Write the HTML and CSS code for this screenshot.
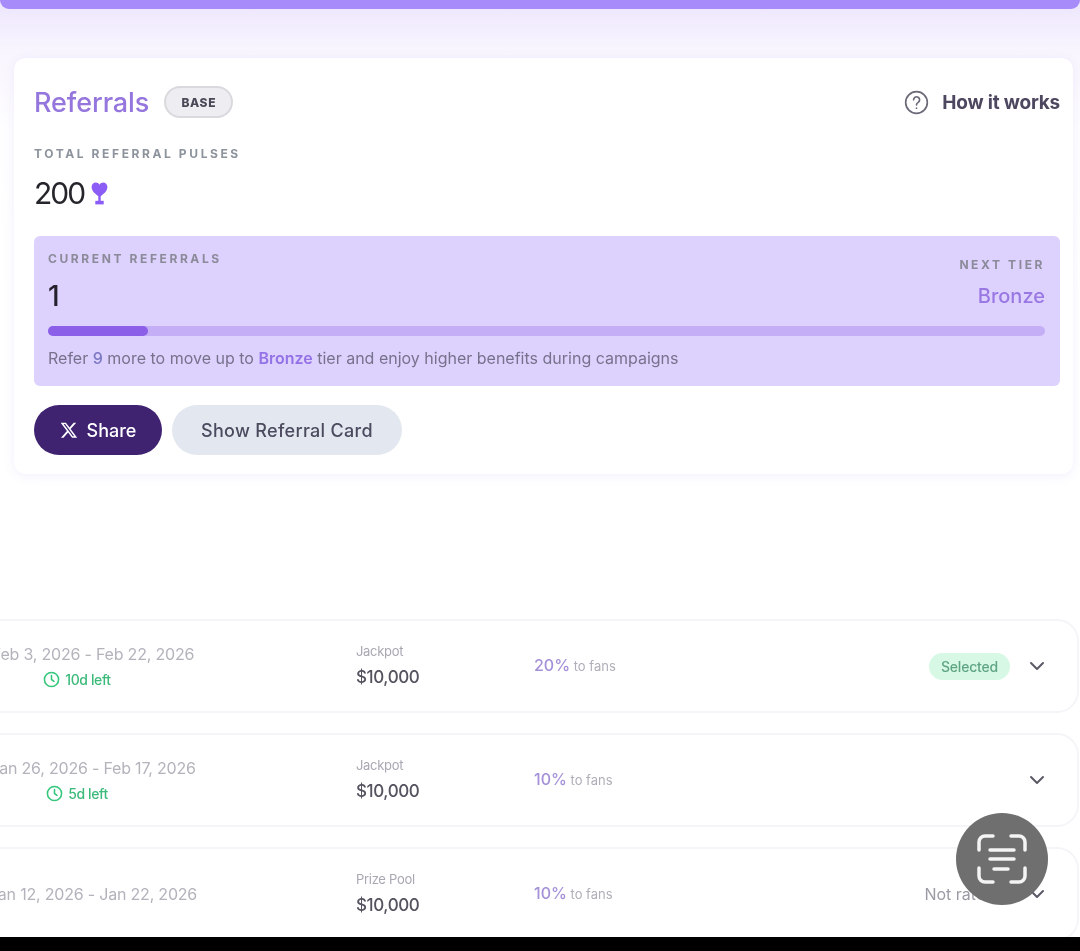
FILE: index.html
```html
<!DOCTYPE html>
<html lang="en">
<head>
  <meta charset="UTF-8" />
  <meta name="viewport" content="width=device-width, initial-scale=1.0"/>
  <title>Referrals</title>
  <link rel="stylesheet" href="styles.css">
</head>

<body>
  <div class="screen">
    <div class="top-band"></div>

    <!-- Referrals card -->
    <div class="card">
      <div class="card-head">
        <div class="card-title">
          <h2>Referrals</h2>
          <span class="tier-badge">BASE</span>
        </div>
        <a class="how-link">
          <svg width="25" height="25" viewBox="0 0 24 24" fill="none" stroke="#6b6878" stroke-width="1.6" stroke-linecap="round">
            <circle cx="12" cy="12" r="10.4"/>
            <path d="M9.2 9.4a2.9 2.9 0 1 1 4.4 2.5c-1 .6-1.6 1.2-1.6 2.3"/>
            <path d="M12 17.4v.1"/>
          </svg>
          How it works
        </a>
      </div>

      <p class="label total-label">TOTAL REFERRAL PULSES</p>
      <div class="total">
        200
        <svg width="17" height="23" viewBox="0 0 17 23" fill="#8b5cf6">
          <path d="M8.5 15C5 12.5.6 9.6.6 5.1.6 2.3 2.7.6 4.8.6c1.6 0 2.9.8 3.7 2.1C9.3 1.4 10.6.6 12.2.6c2.1 0 4.2 1.700 4.2 4.500 0 4.500-4.400 7.400-7.900 9.900z"/>
          <path d="M7.300 13h2.400v6H7.300z"/>
          <path d="M4.300 18.800h8.400V22.400H4.300z"/>
        </svg>
      </div>

      <div class="tier-panel">
        <div class="tier-top">
          <div>
            <p class="label">CURRENT REFERRALS</p>
            <div class="current-count">1</div>
          </div>
          <div class="next-tier">
            <p class="label">NEXT TIER</p>
            <div class="next-name">Bronze</div>
          </div>
        </div>
        <div class="progress"><div class="progress-fill" style="width: 10%"></div></div>
        <p class="tier-note">Refer <b class="num">9</b> more to move up to <b>Bronze</b> tier and enjoy higher benefits during campaigns</p>
      </div>

      <div class="actions">
        <button class="btn btn-share">
          <svg width="18" height="18" viewBox="0 0 24 24" fill="#fff">
            <path d="M18.200 2.200h3.400l-7.400 8.500 8.700 11.500h-6.800l-5.300-7-6.100 7H1.300l7.900-9L.9 2.200h7l4.800 6.400zm-1.200 18h1.900L6.800 4.100H4.800z"/>
          </svg>
          Share
        </button>
        <button class="btn btn-card">Show Referral Card</button>
      </div>
    </div>

    <!-- Campaign rows -->
    <div class="rows">
      <div class="row">
        <div class="col-date">
          <div class="dates">Feb 3, 2026 - Feb 22, 2026</div>
          <div class="left-time">
            <svg width="17" height="17" viewBox="0 0 24 24" fill="none" stroke="#34c77b" stroke-width="2.200" stroke-linecap="round" stroke-linejoin="round"><circle cx="12" cy="12" r="10"/><path d="M12 6.500V12l3.500 2.500"/></svg>
            10d left
          </div>
        </div>
        <div class="col-prize"><span>Jackpot</span><strong>$10,000</strong></div>
        <div class="col-share"><b>20%</b> to fans</div>
        <div class="col-status"><span class="selected">Selected</span></div>
        <svg class="chevron" width="16" height="10" viewBox="0 0 16 10" fill="none" stroke="#5d5a68" stroke-width="2" stroke-linecap="round" stroke-linejoin="round"><path d="M2 2l6 6 6-6"/></svg>
      </div>

      <div class="row">
        <div class="col-date">
          <div class="dates">Jan 26, 2026 - Feb 17, 2026</div>
          <div class="left-time">
            <svg width="17" height="17" viewBox="0 0 24 24" fill="none" stroke="#34c77b" stroke-width="2.200" stroke-linecap="round" stroke-linejoin="round"><circle cx="12" cy="12" r="10"/><path d="M12 6.500V12l3.500 2.500"/></svg>
            5d left
          </div>
        </div>
        <div class="col-prize"><span>Jackpot</span><strong>$10,000</strong></div>
        <div class="col-share"><b>10%</b> to fans</div>
        <div class="col-status"></div>
        <svg class="chevron" width="16" height="10" viewBox="0 0 16 10" fill="none" stroke="#5d5a68" stroke-width="2" stroke-linecap="round" stroke-linejoin="round"><path d="M2 2l6 6 6-6"/></svg>
      </div>

      <div class="row">
        <div class="col-date">
          <div class="dates">Jan 12, 2026 - Jan 22, 2026</div>
        </div>
        <div class="col-prize"><span>Prize Pool</span><strong>$10,000</strong></div>
        <div class="col-share"><b>10%</b> to fans</div>
        <div class="col-status"><span class="not-rated">Not rated</span></div>
        <svg class="chevron" width="16" height="10" viewBox="0 0 16 10" fill="none" stroke="#5d5a68" stroke-width="2" stroke-linecap="round" stroke-linejoin="round"><path d="M2 2l6 6 6-6"/></svg>
      </div>
    </div>

    <div class="bottom-bar"></div>

    <!-- Floating scan button -->
    <div class="scan-btn">
      <svg width="52" height="52" viewBox="0 0 52 52" fill="none" stroke="#f4f4f4" stroke-width="3.500" stroke-linecap="round" stroke-linejoin="round">
        <path d="M3 17V9a6 6 0 0 1 6-6h8"/>
        <path d="M35 3h8a6 6 0 0 1 6 6v8"/>
        <path d="M3 35v8a6 6 0 0 0 6 6h8"/>
        <path d="M49 35v8a6 6 0 0 1-6 6h-8"/>
        <path d="M14 17h24"/>
        <path d="M14 26h24"/>
        <path d="M18 36h14"/>
      </svg>
    </div>
  </div>
</body>
</html>
```

FILE: styles.css
```css
* {
  box-sizing: border-box;
}

body {
  margin: 0;
  font-family: "Inter", "Liberation Sans", sans-serif;
  background-color: #000;
}

/* the reference is a soft, upscaled capture */
.screen {
  position: relative;
  width: 1080px;
  height: 951px;
  overflow: hidden;
  display: flex;
  flex-direction: column;
  background: linear-gradient(180deg, #efe8fd 9px, #f8f5fe 50px, #fefeff 130px, #fff 300px);
  filter: blur(0.6px);
}

.top-band {
  height: 9px;
  flex-shrink: 0;
  background-color: #a78bfa;
  border-radius: 0 0 12px 12px;
}

.card {
  margin: 49px 7px 0 14px;
  height: 416px;
  flex-shrink: 0;
  padding: 20px 13px 0 20px;
  background-color: #fff;
  border-radius: 12px;
  box-shadow: 0 2px 12px rgba(124, 92, 230, 0.09);
}

.card-head {
  display: flex;
  justify-content: space-between;
  align-items: center;
  height: 48px;
}

.card-title {
  display: flex;
  align-items: center;
  gap: 15px;
}

.card-title h2 {
  margin: 0;
  font-size: 27px;
  font-weight: 500;
  letter-spacing: -0.1px;
  color: #9576dd;
}

.tier-badge {
  display: flex;
  align-items: center;
  justify-content: center;
  width: 69px;
  height: 32px;
  border: 2px solid #d9d9de;
  border-radius: 16px;
  background-color: #eeeef2;
  font-size: 12px;
  font-weight: 800;
  letter-spacing: 0.6px;
  color: #494857;
}

.how-link {
  display: flex;
  align-items: center;
  gap: 13px;
  font-size: 19px;
  font-weight: 700;
  letter-spacing: -0.2px;
  color: #4d4760;
}

.label {
  margin: 0;
  font-size: 12px;
  font-weight: 700;
  letter-spacing: 2.6px;
  color: #8b8a98;
}

.total-label {
  margin-top: 20px;
  color: #8c939c;
}

.total {
  display: flex;
  align-items: center;
  gap: 7px;
  margin-top: 14px;
  height: 36px;
  font-size: 30px;
  letter-spacing: -2px;
  color: #26252c;
}

.tier-panel {
  margin-top: 25px;
  height: 150px;
  padding: 15px 15px 0 14px;
  background-color: #ddd1fe;
  border-radius: 6px;
}

.tier-top {
  display: flex;
  justify-content: space-between;
}

.current-count {
  margin-top: 13px;
  font-size: 28px;
  font-weight: 500;
  line-height: 34px;
  color: #25222e;
}

.next-tier {
  text-align: right;
  padding-top: 6px;
}

.next-name {
  margin-top: 10px;
  font-size: 20px;
  line-height: 28px;
  font-weight: 500;
  color: #9a78e4;
}

.progress {
  margin-top: 13px;
  height: 10px;
  border-radius: 5px;
  background-color: #c4aff6;
}

.progress-fill {
  height: 100%;
  border-radius: 5px;
  background-color: #8b5fe8;
}

.tier-note {
  margin: 13px 0 0;
  font-size: 16px;
  line-height: 18px;
  color: #77728c;
}

.tier-note b {
  font-weight: 600;
  color: #9372e6;
}

.tier-note .num {
  font-weight: 500;
  color: #7b78c4;
}

.actions {
  display: flex;
  gap: 10px;
  margin-top: 19px;
}

.btn {
  display: flex;
  align-items: center;
  justify-content: center;
  height: 50px;
  border: none;
  border-radius: 25px;
  font-family: inherit;
  font-size: 18px;
  font-weight: 500;
}

.btn-share {
  width: 128px;
  gap: 9px;
  background-color: #3f2270;
  color: #fff;
}

.btn-card {
  width: 230px;
  letter-spacing: 0.3px;
  background-color: #e3e8f0;
  color: #4b4a5e;
}

.rows {
  margin: 145px 1px 0 -40px;
  flex: 1;
  min-height: 0;
  display: flex;
  flex-direction: column;
  gap: 20px;
  overflow: hidden;
}

.row {
  flex-shrink: 0;
  display: flex;
  align-items: center;
  height: 94px;
  padding-right: 32px;
  background-color: #fff;
  border: 2px solid #f5f4f8;
  border-radius: 22px;
}

.col-date {
  width: 394px;
  padding: 0 132px 1px 0;
  text-align: center;
}

.dates {
  font-size: 16px;
  letter-spacing: -0.2px;
  color: #b4b3bc;
}

.left-time {
  display: flex;
  align-items: center;
  justify-content: center;
  gap: 5px;
  margin-top: 7px;
  padding-right: 32px;
  font-size: 14px;
  font-weight: 500;
  letter-spacing: -0.4px;
  color: #3cba7a;
}

.col-prize {
  width: 178px;
  padding-bottom: 2px;
}

.col-prize span {
  display: block;
  font-size: 13px;
  letter-spacing: -0.3px;
  color: #a9a8b2;
}

.col-prize strong {
  display: block;
  margin-top: 8px;
  font-size: 17px;
  font-weight: 500;
  letter-spacing: -0.4px;
  color: #55535f;
}

.col-share {
  width: 200px;
  padding-bottom: 2px;
  font-size: 13px;
  color: #b0afb9;
}

.col-share b {
  font-size: 16px;
  font-weight: 500;
  color: #a591d8;
}

.col-status {
  flex: 1;
  display: flex;
  justify-content: flex-end;
  padding-right: 19px;
}

.selected {
  padding: 5px 12px;
  border-radius: 14px;
  background-color: #d6f8e4;
  font-size: 14px;
  font-weight: 500;
  letter-spacing: -0.2px;
  color: #5fa583;
}

.not-rated {
  margin-right: 15px;
  font-size: 16px;
  color: #9c9ba5;
}

.chevron {
  flex-shrink: 0;
}

.bottom-bar {
  height: 14px;
  flex-shrink: 0;
  background-color: #000;
}

.scan-btn {
  position: absolute;
  left: 956px;
  top: 813px;
  width: 92px;
  height: 92px;
  display: flex;
  align-items: center;
  justify-content: center;
  border-radius: 50%;
  background-color: #6f6f6f;
}
```
